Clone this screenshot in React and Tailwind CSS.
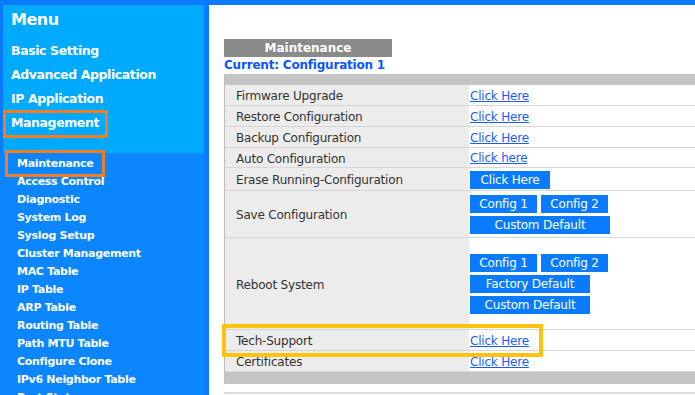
import React from 'react';

const font = { fontFamily: '"DejaVu Sans", "Liberation Sans", sans-serif' };

const mainMenu = ['Basic Setting', 'Advanced Application', 'IP Application', 'Management'];
const subMenu = [
    'Maintenance', 'Access Control', 'Diagnostic', 'System Log', 'Syslog Setup', 'Cluster Management',
    'MAC Table', 'IP Table', 'ARP Table', 'Routing Table', 'Path MTU Table', 'Configure Clone',
    'IPv6 Neighbor Table', 'Port Status',
];

function Link({ children }) {
    return <span className="text-[#1a5cff] underline text-[12px] tracking-[-0.2px]">{children}</span>;
}

function Btn({ w, children }) {
    return (
        <div className={`h-[18px] ${w} bg-[#0a7bff] text-white text-[12px] flex items-center justify-center tracking-[-0.2px]`}>
            {children}
        </div>
    );
}

function Row({ label, h, children }) {
    return (
        <div className={`flex ${h} border-b border-[#d6d6d6]`}>
            <div className="w-[244px] shrink-0 bg-[#ececec] flex items-center pl-[11px] pt-[2px] text-[12px] text-[#333] tracking-[-0.2px]">
                {label}
            </div>
            <div className="flex-1 flex flex-col justify-center gap-[3px] pl-[1px] pt-[1px]">{children}</div>
        </div>
    );
}

export default function App() {
    return (
        <div className="relative w-[695px] h-[395px] overflow-hidden bg-[#0a7bff] flex pt-[5px]" style={font}>
            {/* sidebar */}
            <div className="w-[204px] shrink-0 flex flex-col">
                <div className="ml-[3px] h-[148px] shrink-0 bg-[#00abff] pl-[8px] pt-[4px]">
                    <div className="text-white font-bold text-[16px] leading-[22px] tracking-[-0.5px] mb-[8px]">Menu</div>
                    {mainMenu.map(m => (
                        <div key={m} className="text-white font-bold text-[12.5px] leading-[24px] tracking-[-0.4px]">{m}</div>
                    ))}
                </div>
                <div className="flex-1 bg-[#0b86ff] pl-[17px] pt-[2px]">
                    {subMenu.map(m => (
                        <div key={m} className="text-white font-bold text-[11px] leading-[18px] tracking-[-0.3px]">{m}</div>
                    ))}
                </div>
            </div>

            {/* content */}
            <div className="ml-[5px] flex-1 bg-white pl-[15px] pt-[34px]">
                <div className="w-[168px] h-[18px] bg-[#8a8a8a] text-white font-bold text-[12px] flex items-center justify-center">
                    Maintenance
                </div>
                <div className="text-[#0a55ff] font-bold text-[12px] leading-[17px] tracking-[-0.2px]">Current: Configuration 1</div>
                <div className="w-[520px] border-l border-[#bdbdbd]">
                    <div className="h-[11px] bg-[#c4c4c4]" />
                    <Row label="Firmware Upgrade" h="h-[21px]"><Link>Click Here</Link></Row>
                    <Row label="Restore Configuration" h="h-[21px]"><Link>Click Here</Link></Row>
                    <Row label="Backup Configuration" h="h-[21px]"><Link>Click Here</Link></Row>
                    <Row label="Auto Configuration" h="h-[20px]"><Link>Click here</Link></Row>
                    <Row label="Erase Running-Configuration" h="h-[23px]"><Btn w="w-[80px]">Click Here</Btn></Row>
                    <Row label="Save Configuration" h="h-[47px]">
                        <div className="flex gap-[4px]"><Btn w="w-[67px]">Config 1</Btn><Btn w="w-[67px]">Config 2</Btn></div>
                        <Btn w="w-[140px]">Custom Default</Btn>
                    </Row>
                    <Row label="Reboot System" h="h-[92px]">
                        <div className="flex gap-[4px]"><Btn w="w-[67px]">Config 1</Btn><Btn w="w-[67px]">Config 2</Btn></div>
                        <Btn w="w-[120px]">Factory Default</Btn>
                        <Btn w="w-[120px]">Custom Default</Btn>
                    </Row>
                    <Row label="Tech-Support" h="h-[21px]"><Link>Click Here</Link></Row>
                    <Row label="Certificates" h="h-[21px]"><Link>Click Here</Link></Row>
                    <div className="h-[12px] bg-[#c4c4c4]" />
                </div>
                <div className="w-[520px] mt-[8px] h-[2px] bg-[#dedede]" />
            </div>

            {/* highlight boxes */}
            <div className="absolute left-[3px] top-[110px] w-[105px] h-[28px] border-[3px] border-[#f57c22]" />
            <div className="absolute left-[5px] top-[150px] w-[100px] h-[27px] border-[3px] border-[#f57c22]" />
            <div className="absolute left-[222px] top-[324px] w-[321px] h-[33px] border-[4px] border-[#ffc20e]" />
        </div>
    );
}
